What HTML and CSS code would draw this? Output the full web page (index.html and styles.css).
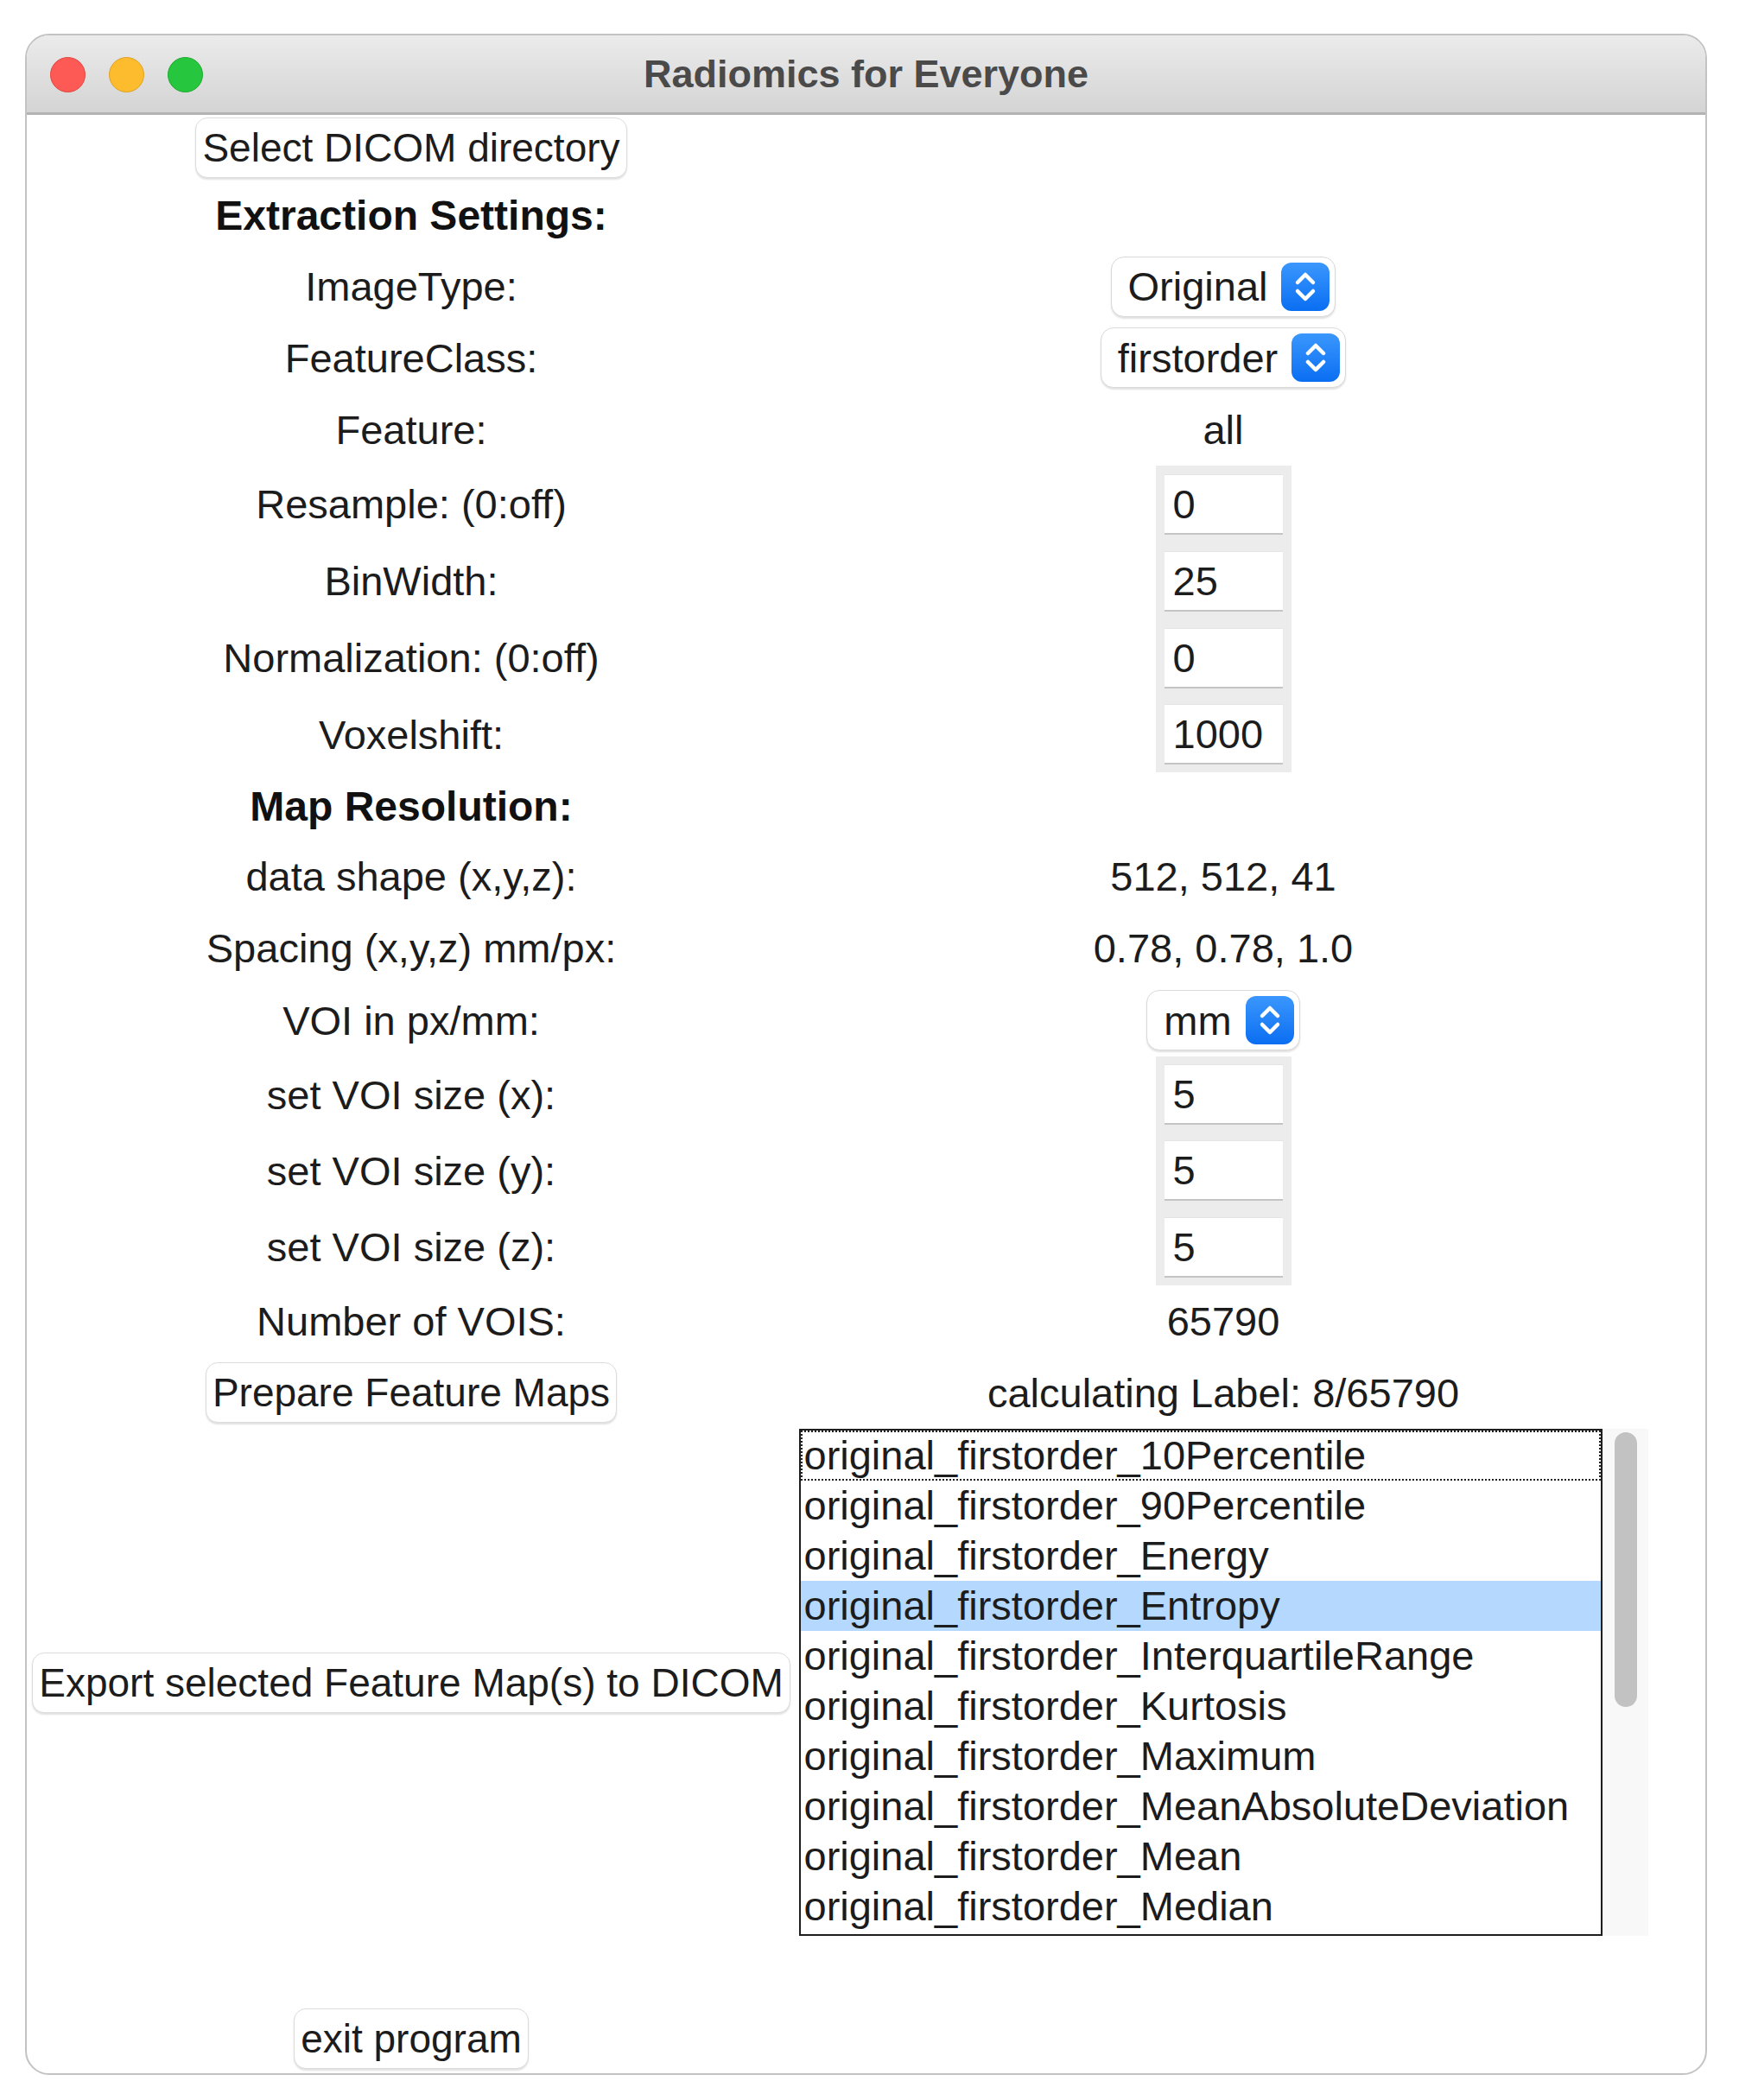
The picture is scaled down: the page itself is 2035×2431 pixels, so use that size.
FILE: index.html
```html
<!DOCTYPE html>
<html lang="en">
<head>
<meta charset="utf-8">
<title>Radiomics for Everyone</title>
<link rel="stylesheet" href="styles.css">
</head>
<body>
<div class="window">
  <div class="titlebar">
    <div class="lights">
      <span class="light red"></span>
      <span class="light yellow"></span>
      <span class="light green"></span>
    </div>
    <div class="title">Radiomics for Everyone</div>
    <div></div>
  </div>
  <div class="grid">
    <div class="btn">Select DICOM directory</div>
    <div></div>

    <div class="label heading">Extraction Settings:</div>
    <div></div>

    <div class="label">ImageType:</div>
    <div class="select"><span class="sel-text">Original</span><svg class="stepper" viewBox="0 0 56 56"><path d="M19 23 L28 14 L37 23 M19 33 L28 42 L37 33"/></svg></div>

    <div class="label">FeatureClass:</div>
    <div class="select"><span class="sel-text">firstorder</span><svg class="stepper" viewBox="0 0 56 56"><path d="M19 23 L28 14 L37 23 M19 33 L28 42 L37 33"/></svg></div>

    <div class="label">Feature:</div>
    <div class="value">all</div>

    <div class="label">Resample: (0:off)</div>
    <div class="entry-cell"><div class="entry">0</div></div>

    <div class="label">BinWidth:</div>
    <div class="entry-cell"><div class="entry">25</div></div>

    <div class="label">Normalization: (0:off)</div>
    <div class="entry-cell"><div class="entry">0</div></div>

    <div class="label">Voxelshift:</div>
    <div class="entry-cell"><div class="entry">1000</div></div>

    <div class="label heading">Map Resolution:</div>
    <div></div>

    <div class="label">data shape (x,y,z):</div>
    <div class="value">512, 512, 41</div>

    <div class="label">Spacing (x,y,z) mm/px:</div>
    <div class="value">0.78, 0.78, 1.0</div>

    <div class="label">VOI in px/mm:</div>
    <div class="select"><span class="sel-text">mm</span><svg class="stepper" viewBox="0 0 56 56"><path d="M19 23 L28 14 L37 23 M19 33 L28 42 L37 33"/></svg></div>

    <div class="label">set VOI size (x):</div>
    <div class="entry-cell"><div class="entry">5</div></div>

    <div class="label">set VOI size (y):</div>
    <div class="entry-cell"><div class="entry">5</div></div>

    <div class="label">set VOI size (z):</div>
    <div class="entry-cell"><div class="entry">5</div></div>

    <div class="label">Number of VOIS:</div>
    <div class="value">65790</div>

    <div class="btn">Prepare Feature Maps</div>
    <div class="value">calculating Label: 8/65790</div>

    <div class="btn">Export selected Feature Map(s) to DICOM</div>
    <div class="listframe">
      <div class="listbox">
        <div class="item focus">original_firstorder_10Percentile</div>
        <div class="item">original_firstorder_90Percentile</div>
        <div class="item">original_firstorder_Energy</div>
        <div class="item selected">original_firstorder_Entropy</div>
        <div class="item">original_firstorder_InterquartileRange</div>
        <div class="item">original_firstorder_Kurtosis</div>
        <div class="item">original_firstorder_Maximum</div>
        <div class="item">original_firstorder_MeanAbsoluteDeviation</div>
        <div class="item">original_firstorder_Mean</div>
        <div class="item">original_firstorder_Median</div>
      </div>
      <div class="scrollbar"><div class="thumb"></div></div>
    </div>

    <div class="btn exit">exit program</div>
    <div></div>
  </div>
</div>
</body>
</html>
```

FILE: styles.css
```css
* {
  box-sizing: border-box;
}

body {
  margin: 0;
  background: #ffffff;
  font-family: "Liberation Sans", Arial, sans-serif;
  color: #1c1c1c;
}

.window {
  margin: 39px 0 0 29px;
  width: 1947px;
  height: 2363px;
  border: 2px solid #c3c3c3;
  border-radius: 28px;
  overflow: hidden;
  background: #ffffff;
}

.titlebar {
  height: 92px;
  background: linear-gradient(#ebebeb, #d4d4d4);
  border-bottom: 3px solid #b3b3b3;
  display: grid;
  grid-template-columns: 1fr auto 1fr;
  align-items: center;
}

.lights {
  display: flex;
  gap: 27px;
  padding-left: 27px;
  padding-top: 2px;
}

.light {
  width: 41px;
  height: 41px;
  border-radius: 50%;
}

.red {
  background: #fd5a55;
  border: 1px solid #e2463f;
}

.yellow {
  background: #fdbb2e;
  border: 1px solid #dea123;
}

.green {
  background: #27c63f;
  border: 1px solid #1dab2c;
}

.title {
  font-weight: bold;
  font-size: 45px;
  color: #4a4a4a;
}

.grid {
  display: grid;
  grid-template-columns: 878px 1002px;
  grid-template-rows: 76px 81px 83px 82px 84px 89px 89px 89px 88px 78px 84px 83px 84px 88px 88px 89px 82px 84px 587px 154px;
  padding-left: 6px;
  font-size: 47px;
}

.label,
.value {
  justify-self: center;
  align-self: center;
  white-space: nowrap;
}

.heading {
  font-weight: bold;
  font-size: 48px;
  color: #111111;
}

.btn {
  justify-self: center;
  align-self: center;
  height: 70px;
  padding: 0 7px;
  font-size: 46px;
  background: #ffffff;
  border: 1px solid #dcdcdc;
  border-radius: 14px;
  box-shadow: 0 2px 2px rgba(0, 0, 0, 0.12);
  display: flex;
  align-items: center;
  white-space: nowrap;
}

.btn.exit {
  align-self: end;
}

.select {
  justify-self: center;
  align-self: center;
  height: 70px;
  display: flex;
  align-items: center;
  gap: 16px;
  padding: 0 6px 0 19px;
  background: #ffffff;
  border: 1px solid #d9d9d9;
  border-radius: 15px;
  box-shadow: 0 2px 2px rgba(0, 0, 0, 0.12);
}

.stepper {
  width: 56px;
  height: 56px;
  border-radius: 12px;
  background: linear-gradient(#3b97fd, #0a6ef2);
  fill: none;
  stroke: #ffffff;
  stroke-width: 4.5;
  stroke-linecap: round;
  stroke-linejoin: round;
}

.entry-cell {
  justify-self: center;
  width: 157px;
  background: #ececec;
  display: flex;
  align-items: center;
  justify-content: center;
}

.entry {
  width: 137px;
  height: 70px;
  background: #ffffff;
  border-top: 1px solid #e4e4e4;
  border-bottom: 2px solid #c4c4c4;
  padding-left: 10px;
  display: flex;
  align-items: center;
}

.listframe {
  justify-self: center;
  display: flex;
}

.listbox {
  width: 930px;
  height: 587px;
  border: 2px solid #1e1e1e;
  background: #ffffff;
}

.item {
  height: 58px;
  line-height: 58px;
  padding-left: 4px;
  white-space: nowrap;
}

.item.focus {
  outline: 2px dotted #222222;
  outline-offset: -2px;
}

.item.selected {
  background: #b4d8fe;
}

.scrollbar {
  width: 53px;
  height: 587px;
  background: #f8f8f8;
  border-left: 1px solid #ededed;
  padding: 4px 0 0 13px;
}

.thumb {
  width: 26px;
  height: 318px;
  border-radius: 13px;
  background: #c2c2c2;
}
```
